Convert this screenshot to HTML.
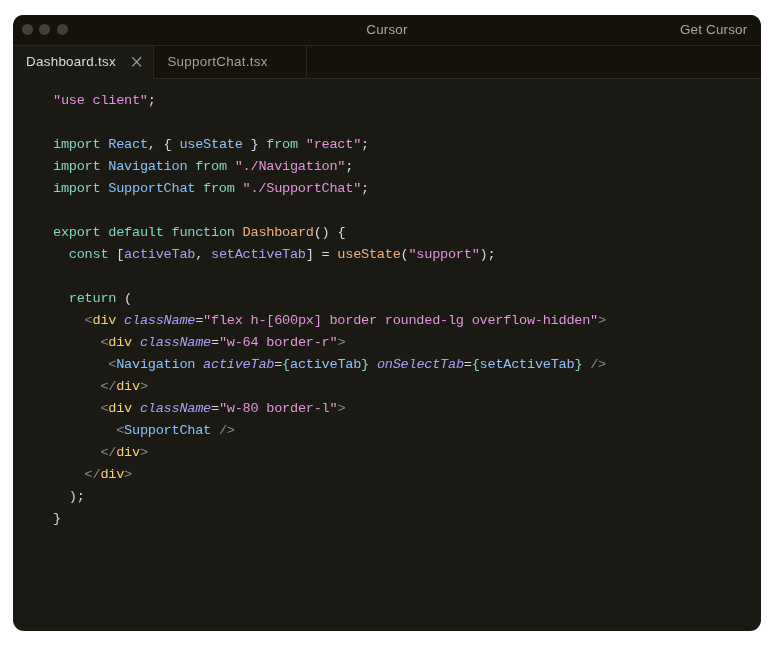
<!DOCTYPE html>
<html>
<head>
<meta charset="utf-8">
<style>
html,body{margin:0;padding:0;background:#fff;}
body{width:781px;height:651px;position:relative;overflow:hidden;font-family:"Liberation Sans",sans-serif;}
#win{will-change:transform;position:absolute;left:13px;top:15px;width:748px;height:616px;border-radius:10.5px 10.5px 11px 11px;background:#1b1913;overflow:hidden;}
#title{position:absolute;left:0;top:0;width:748px;height:30px;background:#14120b;border-bottom:1px solid #2a2823;}
#title .tt{position:absolute;left:0;width:748px;text-align:center;top:0;line-height:30px;font-size:13.4px;letter-spacing:0.2px;color:#a9a8a3;}
#title .tg{position:absolute;right:13.6px;top:0;line-height:30px;font-size:13.4px;letter-spacing:0.2px;color:#a9a8a3;}
#tabs{position:absolute;left:0;top:31px;width:748px;height:32px;background:#14120b;border-bottom:1px solid #2a2823;}
.tab{position:absolute;top:0;height:32px;line-height:32px;font-size:13.4px;letter-spacing:0.28px;box-sizing:border-box;border-right:1px solid #2a2823;}
#t1{left:0;width:141px;background:#1b1913;height:33px;color:#dddcd8;padding-left:13px;}
#t2{left:141px;width:153px;color:#a3a29d;padding-left:13.4px;}
#x{position:absolute;left:118px;top:10px;width:12px;height:12px;}
#code{position:absolute;left:40px;top:75px;margin:0;font-family:"Liberation Mono",monospace;font-size:13.6px;letter-spacing:-0.26px;line-height:22px;color:#d6d6dd;white-space:pre;}
.k{color:#83d6c5}.s{color:#82d2ce}.p{color:#e394dc}.f{color:#efb080}.t{color:#87c3ff}.v{color:#aaa0fa}.a{color:#aaa0fa;font-style:italic}.g{color:#898989}.y{color:#fad075}.b{color:#94c1fa}
</style>
</head>
<body>
<div id="win">
  <div id="title">
    <svg style="position:absolute;left:0;top:0" width="80" height="30" viewBox="0 0 80 30"><g fill="#403f3a"><circle cx="14.5" cy="14.45" r="5.55"/><circle cx="31.5" cy="14.45" r="5.55"/><circle cx="49.5" cy="14.45" r="5.55"/></g></svg>
    <div class="tt">Cursor</div>
    <div class="tg">Get Cursor</div>
  </div>
  <div id="tabs">
    <div class="tab" id="t1">Dashboard.tsx<svg id="x" viewBox="0 0 12 12"><path d="M1.3 1.25L10 10.35M10 1.25L1.3 10.35" stroke="#a9a8a3" stroke-width="1.1" fill="none"/></svg></div>
    <div class="tab" id="t2">SupportChat.tsx</div>
  </div>
<pre id="code"><span class="p">"use client"</span>;

<span class="k">import</span> <span class="t">React</span>, { <span class="b">useState</span> } <span class="k">from</span> <span class="p">"react"</span>;
<span class="k">import</span> <span class="t">Navigation</span> <span class="k">from</span> <span class="p">"./Navigation"</span>;
<span class="k">import</span> <span class="t">SupportChat</span> <span class="k">from</span> <span class="p">"./SupportChat"</span>;

<span class="k">export</span> <span class="k">default</span> <span class="s">function</span> <span class="f">Dashboard</span>() {
  <span class="s">const</span> [<span class="v">activeTab</span>, <span class="v">setActiveTab</span>] = <span class="f">useState</span>(<span class="p">"support"</span>);

  <span class="k">return</span> (
    <span class="g">&lt;</span><span class="y">div</span> <span class="a">className</span>=<span class="p">"flex h-[600px] border rounded-lg overflow-hidden"</span><span class="g">&gt;</span>
      <span class="g">&lt;</span><span class="y">div</span> <span class="a">className</span>=<span class="p">"w-64 border-r"</span><span class="g">&gt;</span>
       <span class="g">&lt;</span><span class="t">Navigation</span> <span class="a">activeTab</span>=<span class="k">{</span><span class="b">activeTab</span><span class="k">}</span> <span class="a">onSelectTab</span>=<span class="k">{</span><span class="b">setActiveTab</span><span class="k">}</span> <span class="g">/&gt;</span>
      <span class="g">&lt;/</span><span class="y">div</span><span class="g">&gt;</span>
      <span class="g">&lt;</span><span class="y">div</span> <span class="a">className</span>=<span class="p">"w-80 border-l"</span><span class="g">&gt;</span>
        <span class="g">&lt;</span><span class="t">SupportChat</span> <span class="g">/&gt;</span>
      <span class="g">&lt;/</span><span class="y">div</span><span class="g">&gt;</span>
    <span class="g">&lt;/</span><span class="y">div</span><span class="g">&gt;</span>
  );
}</pre>
</div>
</body>
</html>
